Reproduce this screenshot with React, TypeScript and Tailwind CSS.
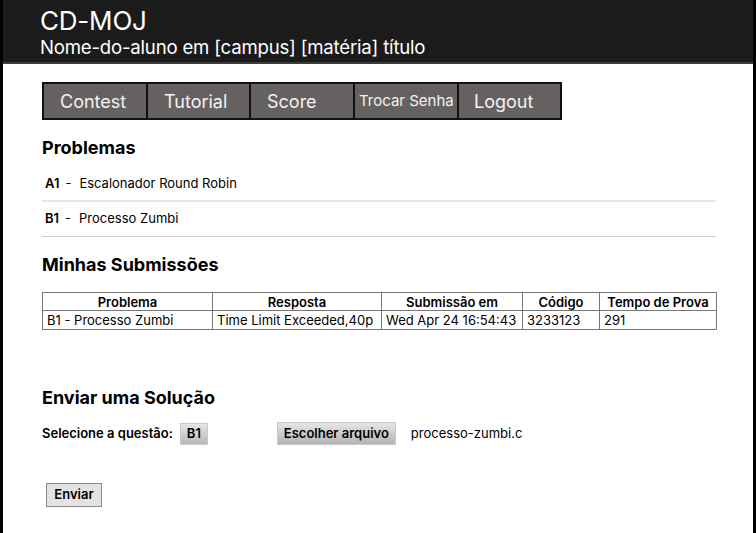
const nav = [
  { label: "Contest", pad: "pl-[16px]", size: "text-[18px]", w: "w-[106px]" },
  { label: "Tutorial", pad: "pl-[16px]", size: "text-[18px]", w: "w-[105px]" },
  { label: "Score", pad: "pl-[16px]", size: "text-[18px]", w: "w-[106px]" },
  { label: "Trocar Senha", pad: "pl-[4px]", size: "text-[15px]", w: "w-[106px]" },
  { label: "Logout", pad: "pl-[15px]", size: "text-[18px]", w: "w-[105px]" },
];

const problems = [
  { id: "A1", name: "Escalonador Round Robin", line: "border-b-2 border-[#e6e6e6]" },
  { id: "B1", name: "Processo Zumbi", line: "border-b border-[#cfcfcf]" },
];

const cols = [
  { head: "Problema", cell: "B1 - Processo Zumbi", w: "w-[170px]" },
  { head: "Resposta", cell: "Time Limit Exceeded,40p", w: "w-[169px]" },
  { head: "Submissão em", cell: "Wed Apr 24 16:54:43", w: "w-[141px]" },
  { head: "Código", cell: "3233123", w: "w-[77px]" },
  { head: "Tempo de Prova", cell: "291", w: "" },
];

export default function App() {
  return (
    <div className="flex h-[533px] w-[756px] flex-col border-x-[3px] border-black bg-white font-['Inter',sans-serif] text-black">
      <header className="flex h-[64px] flex-col border-b-2 border-[#3c3c3c] bg-[#1b1b1b] pl-[37px] pt-[5px] text-white">
        <h1 className="text-[26px] leading-[31px] tracking-[-0.2px]">CD-MOJ</h1>
        <p className="text-[18.6px] leading-[23px] tracking-[-0.2px]">
          Nome-do-aluno em [campus] [matéria] título
        </p>
      </header>

      <main className="flex flex-col pl-[39px] pr-[37px] pt-[18px]">
        <nav className="flex">
          {nav.map((n) => (
            <button
              key={n.label}
              className={`-ml-[2px] h-[38px] overflow-hidden whitespace-nowrap border-2 border-[#111] bg-[#656160] text-left first:ml-0 ${n.w} ${n.pad} ${n.size} text-[#f2f2f2]`}
              type="button"
            >
              {n.label}
            </button>
          ))}
        </nav>

        <h2 className="mt-[17px] text-[18px] font-bold leading-[22px]">Problemas</h2>
        <ul className="mt-[8px] flex flex-col">
          {problems.map((p) => (
            <li
              key={p.id}
              className={`flex h-[35px] items-center gap-[6px] pl-[3px] text-[13px] ${p.line}`}
            >
              <span className="font-semibold">{p.id}</span>
              <span>-</span>
              <span className="ml-[2px]">{p.name}</span>
            </li>
          ))}
        </ul>

        <h2 className="mt-[17px] text-[18px] font-bold leading-[22px]">Minhas Submissões</h2>
        <table className="mt-[16px] w-[675px] border-collapse border border-[#777] text-[13px]">
          <thead>
            <tr>
              {cols.map((c) => (
                <th
                  key={c.head}
                  className={`${c.w} h-[18px] border border-[#777] px-[3px] py-0 text-center font-semibold leading-[16px]`}
                >
                  {c.head}
                </th>
              ))}
            </tr>
          </thead>
          <tbody>
            <tr>
              {cols.map((c) => (
                <td
                  key={c.head}
                  className="h-[19px] border border-[#777] px-[4px] py-0 text-left leading-[16px]"
                >
                  {c.cell}
                </td>
              ))}
            </tr>
          </tbody>
        </table>

        <h2 className="mt-[57px] text-[18px] font-bold leading-[22px]">Enviar uma Solução</h2>
        <div className="mt-[13px] flex items-center text-[13px]">
          <span className="font-semibold">Selecione a questão:</span>
          <button
            className="ml-[7px] h-[22px] w-[28px] border border-[#c9c9c9] bg-gradient-to-b from-[#e6e6e6] to-[#b9b9b9] font-semibold"
            type="button"
          >
            B1
          </button>
          <button
            className="ml-[69px] h-[23px] w-[119px] border border-[#c9c9c9] bg-gradient-to-b from-[#e6e6e6] to-[#b3b3b3] font-semibold"
            type="button"
          >
            Escolher arquivo
          </button>
          <span className="ml-[15px]">processo-zumbi.c</span>
        </div>

        <button
          className="ml-[4px] mt-[38px] h-[24px] w-[56px] border border-[#8a8a8a] bg-[#e3e3e3] text-[13px] font-semibold"
          type="button"
        >
          Enviar
        </button>
      </main>
    </div>
  );
}
